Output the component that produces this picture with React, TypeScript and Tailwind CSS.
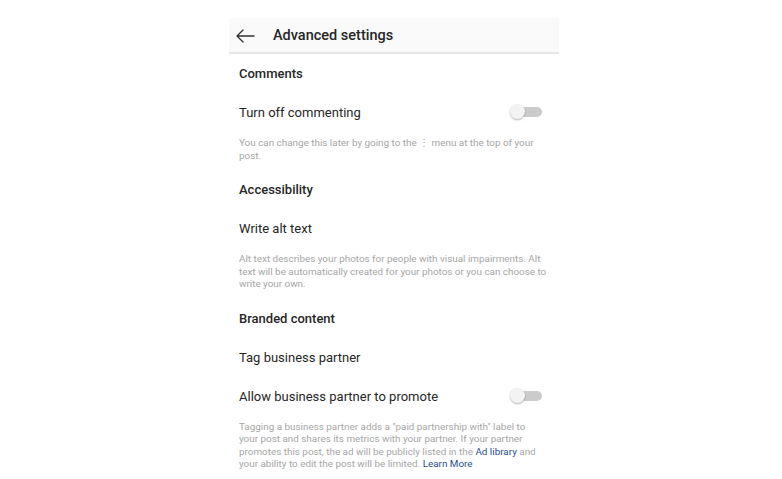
import React from "react";

function Toggle() {
  return (
    <div className="relative h-[16px] w-[32px]">
      <div className="absolute right-0 top-[3px] h-[10px] w-[22px] rounded-full bg-[#cbcbcb]" />
      <div className="absolute left-0 top-0 h-[15px] w-[15px] rounded-full bg-[#f3f3f3] shadow-[0_1px_2px_rgba(0,0,0,0.3)]" />
    </div>
  );
}

function Heading({ children }: { children: React.ReactNode }) {
  return (
    <div className="flex h-[38px] items-center pt-[2px] text-[13px] font-medium text-[#262626]">
      {children}
    </div>
  );
}

function Item({
  label,
  toggle,
  h = "h-[40px]",
  pt = "pt-[2px]",
}: {
  label: string;
  toggle?: boolean;
  h?: string;
  pt?: string;
}) {
  return (
    <div className={`flex ${h} items-center justify-between pr-[17px] text-[13px] text-[#262626]`}>
      <span className={pt}>{label}</span>
      {toggle && <Toggle />}
    </div>
  );
}

function Note({ children }: { children: React.ReactNode }) {
  return (
    <p className="mt-[5px] whitespace-nowrap text-[9.9px] leading-[12.5px] text-[#a6a6a6]">{children}</p>
  );
}

export default function App() {
  return (
    <div
      className="min-h-[479px] w-full bg-white pt-[18px]"
      style={{ fontFamily: "Roboto, 'Noto Sans', sans-serif" }}
    >
      <div className="ml-[229px] w-[330px]">
        <header className="flex h-[36px] items-center gap-[18px] border-b-2 border-[#e6e6e6] bg-[#fafafa] pl-[6px] pt-[2px]">
          <svg width="20" height="16" viewBox="0 0 20 16" fill="none" stroke="#333" strokeWidth="1.4" strokeLinecap="round" strokeLinejoin="round">
            <path d="M19 8H2M8 2L2 8l6 6" />
          </svg>
          <span className="text-[14.5px] font-medium text-[#262626]">Advanced settings</span>
        </header>
        <div className="pl-[10px]">
          <section className="pb-[8px]">
            <Heading>Comments</Heading>
            <Item label="Turn off commenting" toggle />
            <Note>
              You can change this later by going to the ⋮ menu at the top of your
              <br />
              post.
            </Note>
          </section>
          <section className="pb-[8px]">
            <Heading>Accessibility</Heading>
            <Item label="Write alt text" />
            <Note>
              Alt text describes your photos for people with visual impairments. Alt
              <br />
              text will be automatically created for your photos or you can choose to
              <br />
              write your own.
            </Note>
          </section>
          <section>
            <Heading>Branded content</Heading>
            <Item label="Tag business partner" h="h-[39px]" pt="pt-[4px]" />
            <Item label="Allow business partner to promote" toggle />
            <Note>
              Tagging a business partner adds a "paid partnership with" label to
              <br />
              your post and shares its metrics with your partner. If your partner
              <br />
              promotes this post, the ad will be publicly listed in the <a className="text-[#1f4f8f]">Ad library</a> and
              <br />
              your ability to edit the post will be limited. <a className="text-[#1f4f8f]">Learn More</a>
            </Note>
          </section>
        </div>
      </div>
    </div>
  );
}
